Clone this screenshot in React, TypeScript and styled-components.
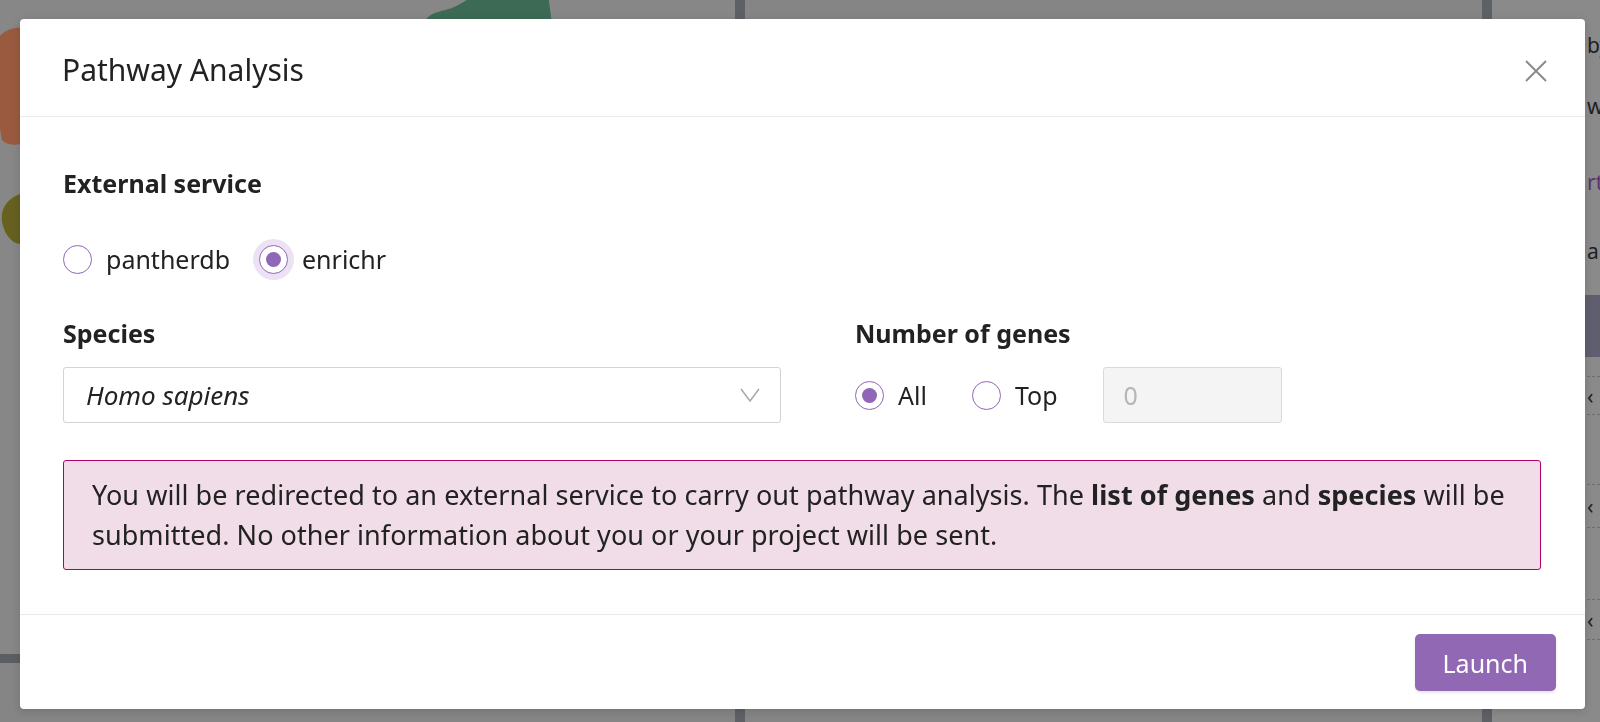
import { useState } from "react";
import styled, { createGlobalStyle, css } from "styled-components";

const GlobalStyle = createGlobalStyle`
  html, body {
    margin: 0;
    padding: 0;
  }
  body {
    font-family: "Noto Sans", "Open Sans", sans-serif;
    color: #222;
    overflow: hidden;
  }
  * {
    box-sizing: border-box;
  }
`;

type SideRowSpec = {
  height: number;
  text?: string;
  accent?: boolean;
  dark?: boolean;
  dashed?: boolean;
};

// what peeks out from behind the modal on the right
const sideRows: SideRowSpec[] = [
  { height: 30 },
  { height: 30, text: "by" },
  { height: 18 },
  { height: 56, text: "w" },
  { height: 96, text: "rt", accent: true },
  { height: 42, text: "ai" },
  { height: 23 },
  { height: 62, dark: true },
  { height: 19 },
  { height: 39, text: "‹", dashed: true },
  { height: 69 },
  { height: 44, text: "‹", dashed: true },
  { height: 71 },
  { height: 41, text: "‹", dashed: true },
];

const App = () => {
  const [service, setService] = useState("enrichr");
  const [genes, setGenes] = useState("all");

  return (
    <>
      <GlobalStyle />
      <Page>
        <PlotPanel>
          <PlotArea>
            <svg width="735" height="654" viewBox="0 0 735 654">
              <path d="M-4 40 C4 30 14 26 26 28 L26 142 C18 146 8 146 2 140 C-2 120 -6 80 -4 40 Z" fill="#9a5a40" />
              <path d="M2 222 C0 206 10 196 26 192 L26 244 C16 246 6 240 2 222 Z" fill="#66611f" />
              <path d="M424 24 C428 12 440 12 452 8 C462 4 468 -2 476 -4 L548 -6 L552 24 Z" fill="#3c6a55" />
            </svg>
          </PlotArea>
          <PlotToolbar />
        </PlotPanel>
        <Splitter />
        <CenterPanel />
        <Splitter />
        <Sidebar>
          {sideRows.map((row, i) => (
            <SideRow key={i} $height={row.height} $accent={row.accent} $dark={row.dark} $dashed={row.dashed}>
              {row.text}
            </SideRow>
          ))}
        </Sidebar>
      </Page>

      <Backdrop>
        <Modal>
          <Header>
            <Title>Pathway Analysis</Title>
            <CloseButton aria-label="Close">
              <svg width="22" height="22" viewBox="0 0 22 22">
                <path d="M1 1 L21 21 M21 1 L1 21" stroke="#8a8a8a" strokeWidth="2" fill="none" />
              </svg>
            </CloseButton>
          </Header>

          <Body>
            <SectionLabel>External service</SectionLabel>
            <RadioGroup $gap={29}>
              <RadioOption onClick={() => setService("pantherdb")}>
                <RadioCircle $checked={service === "pantherdb"} $focused={service === "pantherdb"} />
                pantherdb
              </RadioOption>
              <RadioOption onClick={() => setService("enrichr")}>
                <RadioCircle $checked={service === "enrichr"} $focused={service === "enrichr"} />
                enrichr
              </RadioOption>
            </RadioGroup>

            <Columns>
              <Field>
                <SectionLabel>Species</SectionLabel>
                <Select>
                  <span>Homo sapiens</span>
                  <svg width="20" height="14" viewBox="0 0 20 14">
                    <polyline points="1,1 10,13 19,1" stroke="#a8a8a8" strokeWidth="1.5" fill="none" />
                  </svg>
                </Select>
              </Field>
              <Field>
                <SectionLabel>Number of genes</SectionLabel>
                <RadioGroup $gap={45} $height={56}>
                  <RadioOption onClick={() => setGenes("all")}>
                    <RadioCircle $checked={genes === "all"} />
                    All
                  </RadioOption>
                  <RadioOption onClick={() => setGenes("top")}>
                    <RadioCircle $checked={genes === "top"} />
                    Top
                  </RadioOption>
                  <NumberInput type="text" value="0" disabled={genes === "all"} readOnly />
                </RadioGroup>
              </Field>
            </Columns>

            <Notice>
              You will be redirected to an external service to carry out pathway analysis. The{" "}
              <strong>list of genes</strong> and <strong>species</strong> will be
              <br />
              submitted. No other information about you or your project will be sent.
            </Notice>
          </Body>

          <Footer>
            <LaunchButton>Launch</LaunchButton>
          </Footer>
        </Modal>
      </Backdrop>
    </>
  );
};

export default App;

/* background page, already dimmed by the overlay */

const Page = styled.div`
  width: 1600px;
  height: 722px;
  display: flex;
  background: #878788;
  overflow: hidden;
`;

const PlotPanel = styled.div`
  width: 735px;
  display: flex;
  flex-direction: column;
`;

const PlotArea = styled.div`
  flex: 1;
  overflow: hidden;

  svg {
    display: block;
  }
`;

const PlotToolbar = styled.div`
  height: 68px;
  border-top: 9px solid #5b5e63;
  background: #858586;
`;

const Splitter = styled.div`
  width: 10px;
  background: #5d6065;
`;

const CenterPanel = styled.div`
  flex: 1;
  background: #858586;
`;

const Sidebar = styled.div`
  width: 108px;
  display: flex;
  flex-direction: column;
  background: #8a8a8b;
`;

const SideRow = styled.div<{ $height: number; $accent?: boolean; $dark?: boolean; $dashed?: boolean }>`
  height: ${(p) => p.$height}px;
  flex-shrink: 0;
  display: flex;
  align-items: center;
  padding-left: 95px;
  font-size: 21px;
  white-space: nowrap;
  color: ${(p) => (p.$accent ? "#54386c" : "#1e1e1e")};
  background: ${(p) => (p.$dark ? "#5f5e6e" : "transparent")};
  ${(p) =>
    p.$dashed &&
    css`
      border-top: 1px dashed #6e6e6e;
      border-bottom: 1px dashed #6e6e6e;
    `}
`;

/* modal */

const Backdrop = styled.div`
  position: fixed;
  inset: 0;
  display: flex;
  padding: 19px 15px 13px 20px;
`;

const Modal = styled.div`
  flex: 1;
  display: flex;
  flex-direction: column;
  background: #fff;
  border-radius: 4px;
  box-shadow: 0 2px 8px rgba(0, 0, 0, 0.15);
  overflow: hidden;
`;

const Header = styled.div`
  height: 98px;
  flex-shrink: 0;
  display: flex;
  align-items: center;
  justify-content: space-between;
  padding: 0 38px 0 42px;
  border-bottom: 1px solid #e9e9e9;
`;

const Title = styled.h2`
  margin: 5px 0 0;
  font-size: 30px;
  font-weight: 400;
  line-height: 38px;
  color: #222;
`;

const CloseButton = styled.button`
  margin-top: 6px;
  padding: 0;
  border: none;
  background: none;
  display: flex;
  cursor: pointer;
`;

const Body = styled.div`
  flex: 1;
  padding: 48px 44px 0 43px;
`;

const SectionLabel = styled.div`
  font-size: 25px;
  font-weight: 700;
  line-height: 36px;
  color: #222;
`;

const RadioGroup = styled.div<{ $gap: number; $height?: number }>`
  display: flex;
  align-items: center;
  gap: ${(p) => p.$gap}px;
  height: ${(p) => p.$height ?? 40}px;
  margin-top: ${(p) => (p.$height ? 16 : 38)}px;
`;

const RadioOption = styled.label`
  display: inline-flex;
  align-items: center;
  gap: 14px;
  font-size: 25px;
  color: #222;
  cursor: pointer;
`;

const RadioCircle = styled.span<{ $checked?: boolean; $focused?: boolean }>`
  width: 29px;
  height: 29px;
  border-radius: 50%;
  border: 1.5px solid #9066b6;
  background: #fff;
  display: flex;
  align-items: center;
  justify-content: center;
  box-shadow: ${(p) => (p.$focused ? "0 0 0 6px #ede2f3" : "none")};

  &::after {
    content: "";
    width: 15px;
    height: 15px;
    border-radius: 50%;
    background: #9066b6;
    display: ${(p) => (p.$checked ? "block" : "none")};
  }
`;

const Columns = styled.div`
  display: grid;
  grid-template-columns: 718px 1fr;
  column-gap: 74px;
  margin-top: 36px;
`;

const Field = styled.div`
  display: flex;
  flex-direction: column;
`;

const Select = styled.div`
  margin-top: 16px;
  height: 56px;
  display: flex;
  align-items: center;
  justify-content: space-between;
  padding: 0 20px 0 22px;
  border: 1px solid #d3d3d3;
  border-radius: 3px;
  font-size: 26px;
  font-style: italic;
  color: #222;
`;

const NumberInput = styled.input`
  width: 179px;
  height: 56px;
  padding: 0 0 0 20px;
  border: 1px solid #dadada;
  border-radius: 3px;
  background: #f4f4f4;
  font-family: inherit;
  font-size: 25px;
  color: #b6b6b6;
  -webkit-text-fill-color: #b6b6b6;
  outline: none;
`;

const Notice = styled.div`
  margin-top: 37px;
  padding: 14px 28px;
  background: #f1dde8;
  border: 1px solid #b1006b;
  border-radius: 3px;
  font-size: 27px;
  letter-spacing: 0.05px;
  line-height: 40px;
  color: #222;
  white-space: nowrap;

  strong {
    font-weight: 700;
  }
`;

const Footer = styled.div`
  height: 95px;
  flex-shrink: 0;
  display: flex;
  justify-content: flex-end;
  align-items: flex-start;
  padding: 19px 29px 0 0;
  border-top: 1px solid #e9e9e9;
`;

const LaunchButton = styled.button`
  height: 57px;
  padding: 0 28px;
  border: none;
  border-radius: 5px;
  background: #9168b3;
  color: #fff;
  font-family: inherit;
  font-size: 25px;
  box-shadow: 0 2px 3px rgba(0, 0, 0, 0.1);
  cursor: pointer;
`;
